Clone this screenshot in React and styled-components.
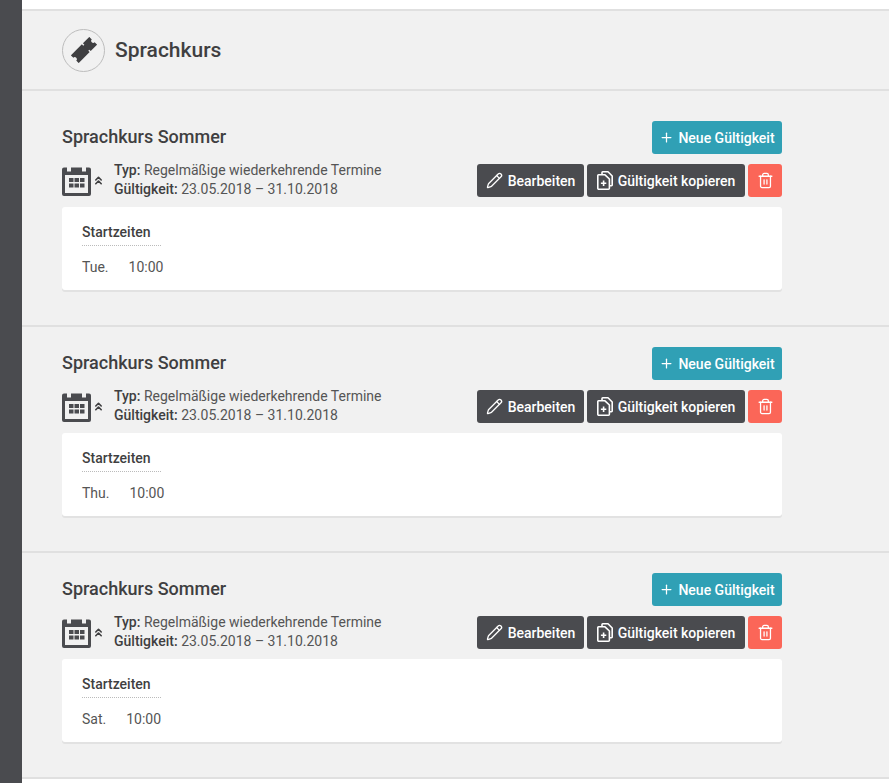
import React from 'react'
import styled, { createGlobalStyle } from 'styled-components'
import { Pencil, Plus, Trash2, ChevronsUp } from 'lucide-react'

const GlobalStyle = createGlobalStyle`
    html, body {
        margin: 0;
        padding: 0;
        background: #fff;
        font-family: Roboto, "Liberation Sans", sans-serif;
        color: #3f3f41;
    }
    body { overflow: hidden; }
`

const Page = styled.div`
    display: flex;
    height: 783px;
    overflow: hidden;
`
const Sidebar = styled.div`
    width: 22px;
    flex: none;
    background: #4a4b4f;
`
const Main = styled.div`
    flex: 1;
    min-width: 0;
`
const TopStrip = styled.div`
    height: 9px;
    background: #fff;
    border-bottom: 2px solid #e0e0e0;
`
const Header = styled.div`
    display: flex;
    align-items: center;
    gap: 10px;
    height: 78px;
    padding-left: 40px;
    box-sizing: content-box;
    background: #f1f1f1;
    border-bottom: 2px solid #e0e0e0;
`
const IconCircle = styled.div`
    width: 41px;
    height: 41px;
    border: 1px solid #bdbdbd;
    border-radius: 50%;
    display: flex;
    align-items: center;
    justify-content: center;
`
const PageTitle = styled.h1`
    margin: 0;
    font-size: 21px;
    font-weight: 500;
    color: #3f3f41;
`
const List = styled.div`
    background: #f1f1f1;
    padding-top: 10px;
`
const Section = styled.section`
    height: 206px;
    padding: 20px 107px 0 40px;
    border-bottom: 2px solid #e0e0e0;
    box-sizing: content-box;
    height: 204px;
`
const TitleRow = styled.div`
    display: flex;
    justify-content: space-between;
    align-items: flex-start;
`
const SectionTitle = styled.h2`
    margin: 0;
    padding-top: 5px;
    font-size: 18px;
    line-height: 21px;
    font-weight: 500;
    color: #3f3f41;
`
const InfoRow = styled.div`
    display: flex;
    justify-content: space-between;
    margin-top: 10px;
`
const InfoLeft = styled.div`
    display: flex;
    align-items: flex-start;
`
const CalendarWrap = styled.div`
    position: relative;
    width: 52px;
    height: 33px;
    flex: none;
    display: flex;
    align-items: center;
    gap: 1px;
`
const InfoText = styled.div`
    font-size: 14px;
    line-height: 19px;
    color: #555;
    margin-top: -3px;
    b {
        font-weight: 500;
        color: #3f3f41;
    }
`
const Actions = styled.div`
    display: flex;
    gap: 3px;
`
const Button = styled.button`
    display: inline-flex;
    align-items: center;
    justify-content: center;
    gap: ${p => p.$gap || 5}px;
    height: 33px;
    width: ${p => p.$width}px;
    padding: 0;
    border: 0;
    border-radius: 3px;
    background: ${p => p.$bg};
    color: #fff;
    font-family: inherit;
    font-size: 14px;
    font-weight: 500;
    white-space: nowrap;
`
const Card = styled.div`
    margin-top: 8px;
    height: 83px;
    box-sizing: border-box;
    padding: 15px 20px 0;
    background: #fff;
    border-radius: 3px;
    box-shadow: 0 2px 0 #e2e2e2;
`
const CardTitle = styled.div`
    display: inline-block;
    font-size: 14px;
    line-height: 19px;
    font-weight: 500;
    color: #3f3f41;
    padding: 0 10px 3px 0;
    border-bottom: 1px dotted #bbb;
`
const Times = styled.div`
    display: flex;
    gap: ${p => p.$gap}px;
    margin-top: 12px;
    font-size: 14px;
    line-height: 19px;
    color: #555;
`

const TicketIcon = () => (
    <svg width="26" height="26" viewBox="0 0 26 26">
        <g transform="rotate(-45 13 13)" fill="#3f3f41">
            <path d="M0 7.5 H15.5 V9.5 H17 V7.5 H26 V11 A2 2 0 0 0 26 15 V18.5 H17 V16.5 H15.5 V18.5 H0 V15 A2 2 0 0 0 0 11 Z" />
            <rect x="15.5" y="11" width="1.5" height="4" />
        </g>
    </svg>
)

const CalendarIcon = () => (
    <svg width="29" height="30" viewBox="0 0 29 30" style={{ flex: 'none' }}>
        <path fillRule="evenodd" fill="#4a4b4f" d="M2 1.5 H5 V5.5 H9 V1.5 H20 V5.5 H24 V1.5 H27 A2 2 0 0 1 29 3.5 V28 A2 2 0 0 1 27 30 H2 A2 2 0 0 1 0 28 V3.5 A2 2 0 0 1 2 1.5 Z M3 9 V27 H26 V9 Z" />
        <path fill="#4a4b4f" d="M7 12 H11.5 V16 H7 Z M12.5 12 H17 V16 H12.5 Z M18 12 H22.5 V16 H18 Z M7 17.5 H11.5 V21.5 H7 Z M12.5 17.5 H17 V21.5 H12.5 Z M18 17.5 H22.5 V21.5 H18 Z" />
    </svg>
)

const CopyIcon = () => (
    <svg width="16" height="19" viewBox="0 0 16 19" fill="none" stroke="#fff" strokeWidth="1.6" strokeLinejoin="round">
        <path d="M5 3 V1.5 A0.7 0.7 0 0 1 5.7 0.8 H11 L15.2 5 V14 A0.7 0.7 0 0 1 14.5 14.7 H13" />
        <path d="M1.5 3.8 H8 L12.4 8 V17.2 A1 1 0 0 1 11.4 18.2 H1.8 A1 1 0 0 1 0.8 17.2 V4.5 A0.7 0.7 0 0 1 1.5 3.8 Z" />
        <path d="M6.6 9.5 V15 M3.9 12.2 H9.3" />
    </svg>
)

const courses = [
    { day: 'Tue.', gap: 20 },
    { day: 'Thu.', gap: 20 },
    { day: 'Sat.', gap: 20 },
]

const App = () => (
    <Page>
        <GlobalStyle />
        <Sidebar />
        <Main>
            <TopStrip />
            <Header>
                <IconCircle><TicketIcon /></IconCircle>
                <PageTitle>Sprachkurs</PageTitle>
            </Header>
            <List>
                {courses.map(c => (
                    <Section key={c.day}>
                        <TitleRow>
                            <SectionTitle>Sprachkurs Sommer</SectionTitle>
                            <Button $bg="#30a0b5" $width={130} $gap={4}>
                                <Plus size={15} strokeWidth={2} />
                                Neue Gültigkeit
                            </Button>
                        </TitleRow>
                        <InfoRow>
                            <InfoLeft>
                                <CalendarWrap>
                                    <CalendarIcon />
                                    <ChevronsUp size={13} strokeWidth={3} color="#3f3f41" />
                                </CalendarWrap>
                                <InfoText>
                                    <div><b>Typ:</b> Regelmäßige wiederkehrende Termine</div>
                                    <div><b>Gültigkeit:</b> 23.05.2018 – 31.10.2018</div>
                                </InfoText>
                            </InfoLeft>
                            <Actions>
                                <Button $bg="#4a4b4f" $width={107}>
                                    <Pencil size={17} strokeWidth={1.8} />
                                    Bearbeiten
                                </Button>
                                <Button $bg="#4a4b4f" $width={158}>
                                    <CopyIcon />
                                    Gültigkeit kopieren
                                </Button>
                                <Button $bg="#fb6658" $width={34} aria-label="Löschen">
                                    <Trash2 size={17} strokeWidth={1.8} />
                                </Button>
                            </Actions>
                        </InfoRow>
                        <Card>
                            <CardTitle>Startzeiten</CardTitle>
                            <Times $gap={c.gap}>
                                <span>{c.day}</span>
                                <span>10:00</span>
                            </Times>
                        </Card>
                    </Section>
                ))}
            </List>
        </Main>
    </Page>
)

export default App
